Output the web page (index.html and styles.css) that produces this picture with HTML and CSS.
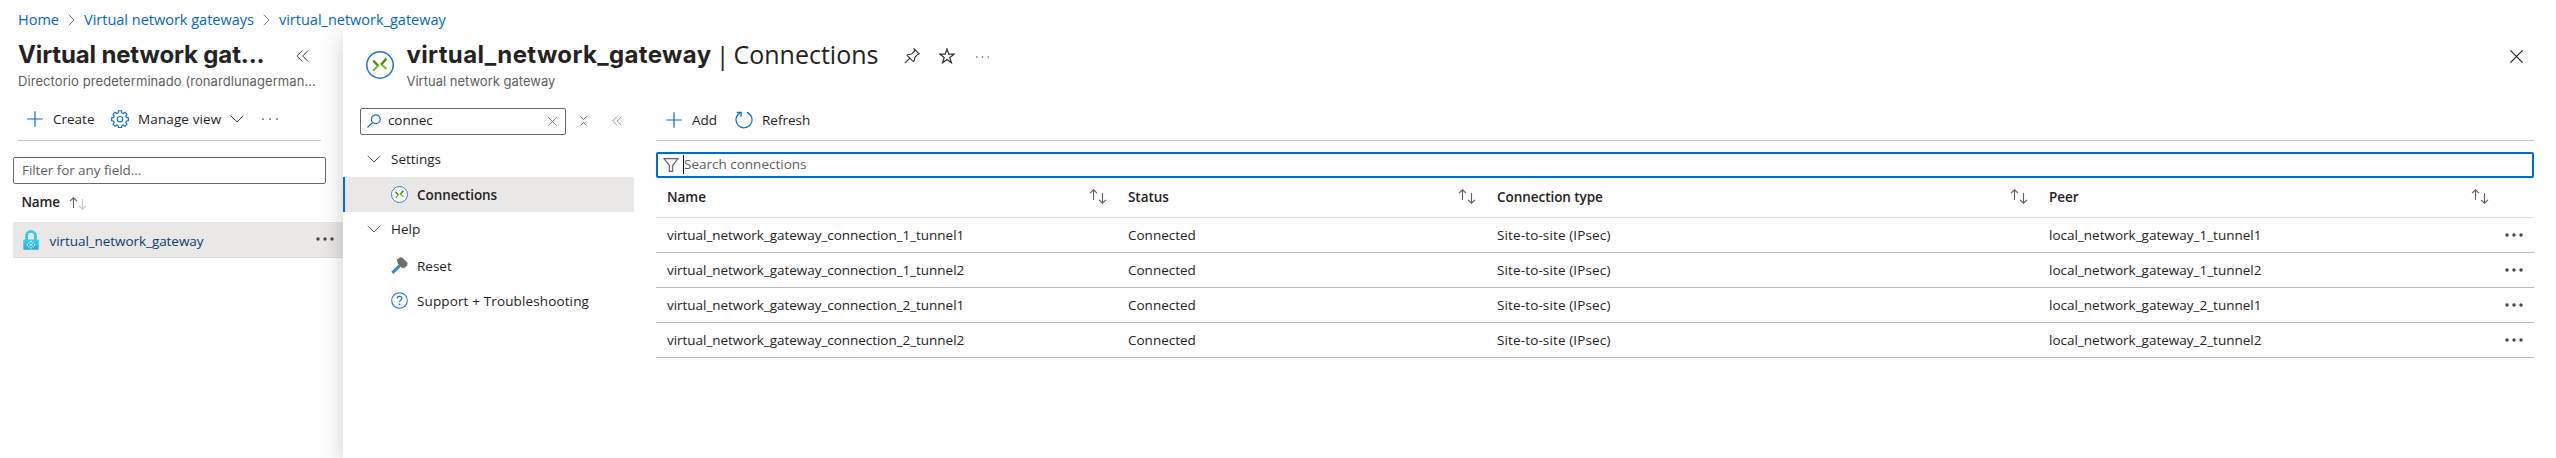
FILE: index.html
```html
<!DOCTYPE html>
<html lang="en">
<head>
<meta charset="utf-8">
<title>virtual_network_gateway | Connections</title>
<link rel="stylesheet" href="styles.css">
</head>
<body>
<svg class="defs" width="0" height="0" aria-hidden="true">
  <symbol id="chev-down" viewBox="0 0 14 8"><path d="M.7.7 7 7 13.3.7" fill="none" stroke="currentColor"/></symbol>
  <symbol id="chev-right" viewBox="0 0 7 12"><path d="M.6.6 6 6 .6 11.4" fill="none" stroke="currentColor"/></symbol>
  <symbol id="double-left" viewBox="0 0 13 12"><path d="M6.4.5.9 6l5.500 5.500M12.200.5 6.700 6l5.500 5.500" fill="none" stroke="currentColor"/></symbol>
  <symbol id="plus" viewBox="0 0 16 16"><path d="M8 .2v15.600M.2 8h15.600" stroke="currentColor" stroke-width="1.200" fill="none"/></symbol>
  <symbol id="dots" viewBox="0 0 18 4"><circle cx="2" cy="2" r="1.700"/><circle cx="9" cy="2" r="1.700"/><circle cx="16" cy="2" r="1.700"/></symbol>
  <symbol id="dots-thin" viewBox="0 0 16 2"><circle cx="1" cy="1" r=".85"/><circle cx="8" cy="1" r=".85"/><circle cx="15" cy="1" r=".85"/></symbol>
  <symbol id="arrow-up" viewBox="0 0 8 11"><path d="M4 11V.8M.5 4.200 4 .8l3.500 3.400" fill="none" stroke="currentColor" stroke-width="1.100"/></symbol>
  <symbol id="arrow-down" viewBox="0 0 8 11"><path d="M4 0v10.200M.5 6.800 4 10.200l3.500-3.400" fill="none" stroke="currentColor" stroke-width="1.100"/></symbol>
  <symbol id="connection" viewBox="0 0 28 28">
    <circle cx="14" cy="14" r="13.200" fill="#fff" stroke="#1b74d8" stroke-width="1.500"/>
    <path d="M7.300 9.700l4.700 4.800-4.800 5.200" fill="none" stroke="#76bc2d" stroke-width="2.100"/>
    <path d="M7.300 9.700l4.700 4.800" fill="none" stroke="#4f8a1c" stroke-width="2.100"/>
    <path d="M20.300 7.800l-4.900 5.500 5 4.800" fill="none" stroke="#76bc2d" stroke-width="2.100"/>
    <path d="M20.300 7.800l-4.900 5.500" fill="none" stroke="#4f8a1c" stroke-width="2.100"/>
  </symbol>
</svg>

<nav class="breadcrumb">
  <a>Home</a><svg class="sep"><use href="#chev-right"/></svg>
  <a>Virtual network gateways</a><svg class="sep"><use href="#chev-right"/></svg>
  <a>virtual_network_gateway</a>
</nav>

<div class="blades">
  <aside class="list-blade">
    <header class="list-head">
      <h2>Virtual network gat...</h2>
      <svg class="collapse"><use href="#double-left"/></svg>
    </header>
    <p class="sub directory">Directorio predeterminado (ronardlunagerman...</p>
    <div class="toolbar">
      <svg class="plus"><use href="#plus"/></svg><span class="create">Create</span>
      <svg class="gear" viewBox="0 0 18 18"><path d="M7.500.8h3l.4 2.100 1.300.6 1.800-1.200 2 2-1.200 1.800.6 1.300 2 .4v2.800l-2 .5-.6 1.300 1.200 1.800-2 2-1.800-1.200-1.300.6-.4 2h-3l-.4-2-1.300-.6L4 16.200l-2-2 1.200-1.800-.6-1.300-2-.5V7.800l2-.4.6-1.300L2 4.300l2-2 1.800 1.200 1.300-.6z" fill="none" stroke="#0f6cc9" stroke-width="1.100"/><circle cx="9" cy="9.200" r="2.700" fill="none" stroke="#0f6cc9" stroke-width="1.100"/></svg>
      <span class="manage">Manage view</span>
      <svg class="chev"><use href="#chev-down"/></svg>
      <svg class="more"><use href="#dots-thin"/></svg>
    </div>
    <div class="filter">Filter for any field...</div>
    <div class="list-name">Name <svg class="arr"><use href="#arrow-up"/></svg><svg class="arr down faded"><use href="#arrow-down"/></svg></div>
    <div class="list-row">
      <svg class="lock" viewBox="0 0 16 20">
        <defs><linearGradient id="lk" x1="0" y1="0" x2="0" y2="1"><stop offset="0" stop-color="#35d3f3"/><stop offset="1" stop-color="#2ba6dc"/></linearGradient></defs>
        <path d="M3.600 10V5.800a4.400 4.400 0 0 1 8.800 0V10" fill="none" stroke="#36c8ee" stroke-width="2.800"/>
        <rect x=".3" y="9.500" width="15.400" height="10.300" rx=".8" fill="url(#lk)"/>
        <path d="M5 12l6 5.400M11 12l-6 5.400" stroke="#c4effb" stroke-width=".9"/>
        <path d="M3.200 14.700l1.700-1.200v2.400zM12.800 14.700l-1.700-1.200v2.400zM8 10.600l-1.200 1.500h2.400zM8 18.900l-1.200-1.500h2.400z" fill="#effcff"/>
      </svg>
      <span class="list-link">virtual_network_gateway</span>
      <svg class="dots"><use href="#dots"/></svg>
    </div>
  </aside>

  <main class="blade">
    <header class="blade-head">
      <svg class="blade-icon"><use href="#connection"/></svg>
      <div class="titles">
        <h1><b>virtual_network_gateway</b><i>|</i><span>Connections</span></h1>
        <p class="sub">Virtual network gateway</p>
      </div>
      <div class="head-actions">
        <svg class="pin" viewBox="0 0 16 16"><path d="M10.200.8l5 5-1.500.6-2.900 2.900-.5 3.400-1 .9-6.100-6.100 1-1 3.400-.4 2.800-2.900zM6.200 9.800.8 15.200" fill="none" stroke="#323130" stroke-width="1.100"/></svg>
        <svg class="star" viewBox="0 0 16 16"><path d="M8 1l1.800 5.200h5.300l-4.300 3.300 1.600 5.300L8 11.600l-4.400 3.200 1.600-5.300L.9 6.200h5.300z" fill="none" stroke="#323130" stroke-width="1.200"/></svg>
        <svg class="more head-more"><use href="#dots-thin"/></svg>
      </div>
      <svg class="close" viewBox="0 0 13 13"><path d="M.4.4l12.200 12.200M12.600.4.4 12.600" stroke="#201f1e" stroke-width="1.200"/></svg>
    </header>

    <div class="blade-body">
      <nav class="menu">
        <div class="menu-top">
          <div class="menu-search">
            <svg class="mag" viewBox="0 0 14 14"><circle cx="8.800" cy="5.200" r="4.400" fill="none" stroke="#0f6cc9" stroke-width="1.200"/><path d="M5.600 8.400.5 13.500" stroke="#0f6cc9" stroke-width="1.300"/></svg>
            <span>connec</span>
            <svg class="clear" viewBox="0 0 9 9"><path d="M.3.3l8.400 8.400M8.700.3.3 8.700" stroke="#797775" stroke-width=".9"/></svg>
          </div>
          <svg class="expand" viewBox="0 0 7 10"><path d="M.5.5l3 3 3-3M.5 9.500l3-3 3 3" fill="none" stroke="#797775"/></svg>
          <svg class="fold"><use href="#double-left"/></svg>
        </div>
        <div class="group"><svg class="chev"><use href="#chev-down"/></svg>Settings</div>
        <div class="item active"><svg class="ico"><use href="#connection"/></svg><span>Connections</span></div>
        <div class="group help"><svg class="chev"><use href="#chev-down"/></svg>Help</div>
        <div class="item low"><svg class="ico" viewBox="0 0 17 17"><path d="M1.300 15.800l8-7.600" stroke="#3288c8" stroke-width="3"/><path d="M5.800 2.800 9.200.2l2.300.6 5 5-.2 2.500-3.100 3-2.300-.6L6.800 6.600z" fill="#6e6e6e"/></svg><span>Reset</span></div>
        <div class="item low"><svg class="ico" viewBox="0 0 17 17"><circle cx="8.500" cy="8.500" r="7.800" fill="none" stroke="#1b74d8" stroke-width="1.100"/><path d="M6.200 6.600c0-3 4.600-3 4.600-.2 0 1.700-2.300 1.800-2.300 3.900" fill="none" stroke="#1b74d8" stroke-width="1.300"/><circle cx="8.500" cy="12.300" r=".9" fill="#1b74d8"/></svg><span class="wide">Support + Troubleshooting</span></div>
      </nav>

      <section class="content">
        <div class="toolbar commands">
          <svg class="plus"><use href="#plus"/></svg><span class="add">Add</span>
          <svg class="refresh" viewBox="0 0 18 18"><path d="M12.100 1.400a8 8 0 1 1-7 .4" fill="none" stroke="#0f6cc9" stroke-width="1.200"/><path d="M1.800 1.500h4.300v4.300" fill="none" stroke="#0f6cc9" stroke-width="1.300"/></svg>
          <span>Refresh</span>
        </div>
        <div class="search">
          <svg class="funnel" viewBox="0 0 16 14"><path d="M.9.6h14.200L9.700 7.300v6.100H6.300V7.300z" fill="none" stroke="#605e5c" stroke-width="1.100"/></svg>
          <span class="caret"></span><span>Search connections</span>
        </div>
        <div class="grid head">
          <div>Name<span class="sort"><svg class="arr"><use href="#arrow-up"/></svg><svg class="arr down"><use href="#arrow-down"/></svg></span></div>
          <div>Status<span class="sort"><svg class="arr"><use href="#arrow-up"/></svg><svg class="arr down"><use href="#arrow-down"/></svg></span></div>
          <div>Connection type<span class="sort"><svg class="arr"><use href="#arrow-up"/></svg><svg class="arr down"><use href="#arrow-down"/></svg></span></div>
          <div>Peer<span class="sort"><svg class="arr"><use href="#arrow-up"/></svg><svg class="arr down"><use href="#arrow-down"/></svg></span></div>
        </div>
        <div class="grid row"><div class="name">virtual_network_gateway_connection_1_tunnel1</div><div>Connected</div><div class="wide">Site-to-site (IPsec)</div><div>local_network_gateway_1_tunnel1</div><svg class="dots"><use href="#dots"/></svg></div>
        <div class="grid row"><div class="name">virtual_network_gateway_connection_1_tunnel2</div><div>Connected</div><div class="wide">Site-to-site (IPsec)</div><div>local_network_gateway_1_tunnel2</div><svg class="dots"><use href="#dots"/></svg></div>
        <div class="grid row"><div class="name">virtual_network_gateway_connection_2_tunnel1</div><div>Connected</div><div class="wide">Site-to-site (IPsec)</div><div>local_network_gateway_2_tunnel1</div><svg class="dots"><use href="#dots"/></svg></div>
        <div class="grid row"><div class="name">virtual_network_gateway_connection_2_tunnel2</div><div>Connected</div><div class="wide">Site-to-site (IPsec)</div><div>local_network_gateway_2_tunnel2</div><svg class="dots"><use href="#dots"/></svg></div>
      </section>
    </div>
  </main>
</div>
</body>
</html>
```
FILE: styles.css
```css
* { box-sizing: border-box; margin: 0; padding: 0; }
body {
  height: 458px;
  display: flex;
  flex-direction: column;
  overflow: hidden;
  background: #fff;
  color: #242322;
  font: 13.5px/20px "Open Sans", sans-serif;
  white-space: nowrap;
}
svg { flex: none; display: block; fill: currentColor; }
.defs { position: absolute; }

.breadcrumb {
  height: 30px;
  padding: 9px 0 0 18px;
  display: flex;
  color: #0067c5;
  font-size: 14.5px;
  line-height: 21px;
}
.sep { width: 7px; height: 12px; margin: 5px 9px 0 9px; color: #8a8886; }

.blades { flex: 1; display: flex; overflow: hidden; }

/* Resource list */
.list-blade { width: 343px; }
.list-head { display: flex; padding-left: 18px; }
h2 { width: 278px; font: 700 24px/30px Inter, sans-serif; letter-spacing: -.14px; padding-top: 10px; height: 40px; }
.collapse { width: 13px; height: 12px; margin-top: 20px; color: #484644; }
.sub { color: #605e5c; font: 13px/20px Inter, sans-serif; }
.directory { padding: 1px 0 0 18px; letter-spacing: .08px; height: 21px; }
.toolbar { display: flex; align-items: center; }
.list-blade .toolbar { height: 50px; margin: 0 22px 0 18px; padding: 7px 0 0 9px; border-bottom: 1px solid #c8c6c4; }
.plus { width: 16px; height: 16px; margin-right: 10px; color: #0f6cc9; }
.create { width: 58px; }
.gear { width: 18px; height: 18px; margin-right: 9px; }
.manage { width: 92px; letter-spacing: .12px; }
.chev { width: 14px; height: 8px; color: #484644; }
.more { width: 16px; height: 2px; margin-left: 18px; color: #323130; }
.filter {
  margin: 16px 17px 0 13px;
  height: 27px;
  padding-left: 8px;
  border: 1px solid #6b6967;
  border-radius: 2px;
  color: #605e5c;
  line-height: 24px;
  letter-spacing: -.07px;
}
.list-name { display: flex; height: 38px; padding: 8px 0 0 21.5px; font-weight: 600; letter-spacing: -.2px; }
.arr { width: 9px; height: 11px; color: #605e5c; margin-top: -2px; }
.arr.down { margin-top: 2px; }
.list-name .arr { margin-top: 5px; }
.list-name .arr:first-child { margin-left: 9px; }
.list-name .arr.down { margin-top: 7px; margin-left: 0; }
.arr.faded { color: #c8c6c4; }
.list-row {
  margin-left: 13px;
  height: 36px;
  display: flex;
  align-items: center;
  padding-left: 10px;
  background: #e9e8e7;
  border-bottom: 1px solid #dedddc;
  color: #0b3d6e;
}
.lock { width: 16px; height: 20px; margin-right: 10.5px; }
.list-link { width: 266px; letter-spacing: -.06px; padding-top: 2px; }
.dots { width: 18px; height: 4px; color: #484644; }
.list-row .dots { margin-bottom: 2px; }

/* Resource blade */
.blade { flex: 1; background: #fff; box-shadow: 0 6px 22px rgba(0,0,0,.2); }
.blade-head { display: flex; height: 64px; padding-left: 23px; }
.blade-icon { width: 28px; height: 28px; margin-top: 21px; }
.titles { width: 510px; padding: 10px 0 0 12.5px; }
h1 { display: flex; height: 31px; font: 400 25px/30px "Open Sans", sans-serif; }
h1 b { font: 700 24px/30px Inter, sans-serif; letter-spacing: .36px; }
h1 i { width: 22px; text-align: center; font-style: normal; }
h1 span { margin-top: -1px; }
.head-actions { display: flex; flex: 1; padding-top: 18px; }
.pin { width: 16px; height: 16px; }
.star { width: 16px; height: 16px; margin-left: 19px; }
.head-more { width: 13px; height: 2px; margin: 8px 0 0 21px; }
.close { width: 13px; height: 13px; margin: 20px 33px 0 0; }

.blade-body { display: flex; }
.menu { width: 291px; }
.menu-top { display: flex; align-items: center; padding: 14px 0 0 17px; height: 40px; }
.menu-search { width: 206px; height: 27px; display: flex; align-items: center; border: 1px solid #6b6967; border-radius: 2px; padding-left: 6px; }
.mag { width: 14px; height: 14px; margin-right: 7px; }
.menu-search span { width: 160px; margin-top: -2px; letter-spacing: -.1px; }
.clear { width: 9px; height: 9px; }
.expand { width: 7px; height: 10px; margin-left: 14px; }
.fold { width: 10px; height: 10px; margin-left: 25px; color: #797775; }
.group { display: flex; align-items: center; height: 35px; padding-left: 24px; }
.menu-top + .group { height: 43px; padding-top: 7px; }
.group.help { padding-bottom: 1px; }
.group .chev { margin-right: 10px; color: #605e5c; }
.item { display: flex; align-items: center; height: 35px; padding-left: 46px; border-left: 2px solid transparent; }
.item.low { padding-top: 2px; }
.item.active { background: #e9e8e7; border-color: #006cd1; font-weight: 600; letter-spacing: -.08px; }
.ico { width: 17px; height: 17px; margin-right: 9px; }
.wide { letter-spacing: .13px; }

.content { flex: 1; margin: 0 22px; }
.commands { height: 47px; padding: 5px 0 0 10px; border-bottom: 1px solid #c8c6c4; }
.add { width: 43px; }
.refresh { width: 18px; height: 18px; margin-right: 9px; }
.search { display: flex; align-items: center; margin-top: 11px; height: 26px; border: 2px solid #006cd1; border-radius: 2px; padding: 0 0 1px 5px; color: #605e5c; }
.search span:last-child { margin-top: -1px; }
.funnel { width: 16px; height: 14px; margin-right: 4px; }
.caret { width: 1px; height: 19px; background: #000; }
.grid { display: grid; grid-template-columns: 461px 369px 552px 456px 18px; padding-left: 11px; align-items: center; }
.head { height: 40px; padding-bottom: 1px; border-bottom: 1px solid #e1dfdd; font-weight: 600; letter-spacing: -.05px; }
.head > div { display: flex; align-items: center; }
.sort { display: flex; margin: 0 21px 0 auto; }
.head > div:last-child .sort { margin-right: 16px; }
.row { height: 35px; border-bottom: 1px solid #bdbbb9; }
.row .name { letter-spacing: -.04px; }
```
